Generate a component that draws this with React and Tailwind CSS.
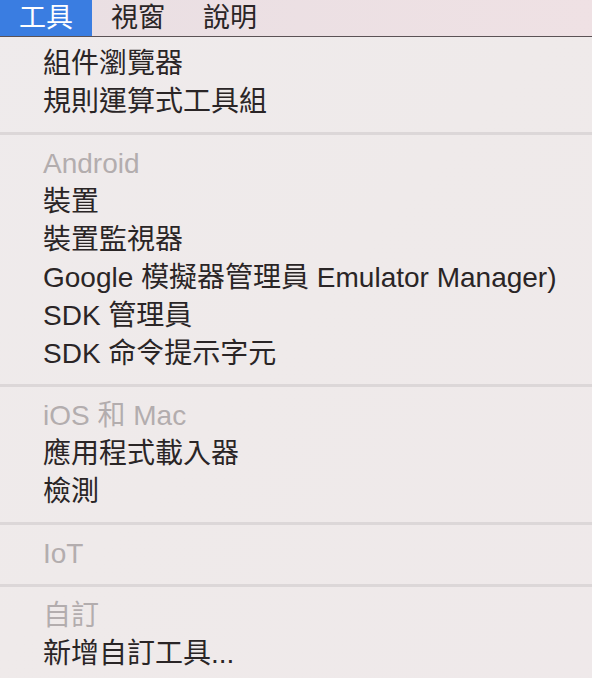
import React from "react";

const font = { fontFamily: '"Liberation Sans", "Noto Sans CJK TC", sans-serif' };

const sections = [
  {
    items: ["組件瀏覽器", "規則運算式工具組"],
  },
  {
    header: "Android",
    items: [
      "裝置",
      "裝置監視器",
      "Google 模擬器管理員 Emulator Manager)",
      "SDK 管理員",
      "SDK 命令提示字元",
    ],
  },
  { header: "iOS 和 Mac", items: ["應用程式載入器", "檢測"] },
  { header: "IoT", items: [] },
  { header: "自訂", items: ["新增自訂工具..."] },
];

function Row({ children, muted }) {
  return (
    <div
      className={`h-[38px] flex items-center pl-[43px] text-[28px] whitespace-nowrap ${
        muted ? "text-[#b3adae]" : "text-[#2a2526]"
      }`}
    >
      {children}
    </div>
  );
}

export default function App() {
  return (
    <div className="w-[592px] h-[678px] overflow-hidden bg-gradient-to-br from-[#efebec] via-[#efeaea] to-[#efe9ea]" style={font}>
      {/* menu bar */}
      <div className="h-[37px] flex bg-gradient-to-r from-[#e9dfe3] to-[#efe1e4] border-b border-[#5b5255] text-[27px] text-[#2a2526]">
        <div className="h-[36px] px-[19px] flex items-center bg-[#3a7de1] text-white">工具</div>
        <div className="h-[36px] px-[19px] flex items-center">視窗</div>
        <div className="h-[36px] px-[19px] flex items-center">說明</div>
      </div>

      <div className="pt-[8px]">
        {sections.map((s, i) => (
          <div key={i}>
            {i > 0 && (
              <div className="h-[24px] flex items-center">
                <div className="w-full h-[3px] bg-[#dcd7d8]" />
              </div>
            )}
            {s.header && <Row muted>{s.header}</Row>}
            {s.items.map((it) => (
              <Row key={it}>{it}</Row>
            ))}
          </div>
        ))}
      </div>
    </div>
  );
}
